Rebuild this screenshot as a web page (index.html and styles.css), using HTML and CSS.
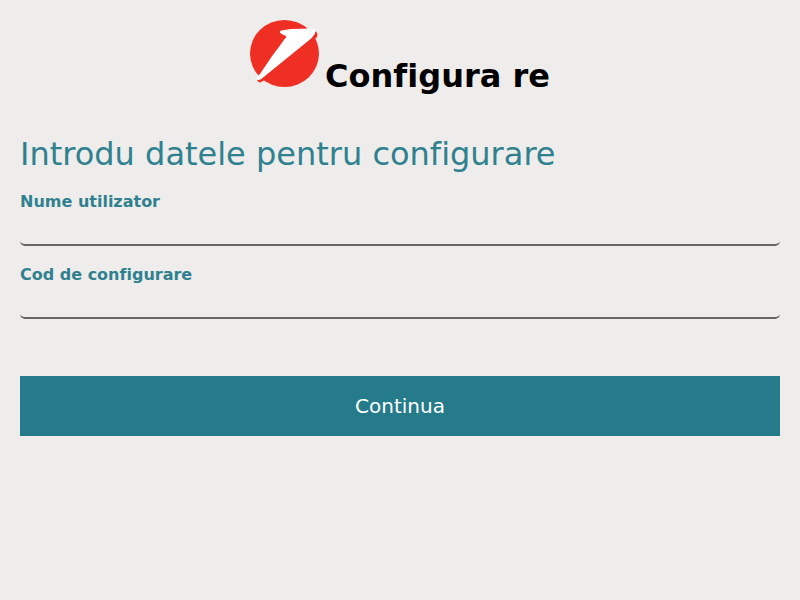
FILE: index.html
```html
<!DOCTYPE html>
<html lang="ro">
<head>
<meta charset="utf-8">
<meta name="viewport" content="width=device-width, initial-scale=1">
<title>Configurare</title>
<link rel="stylesheet" href="styles.css">
</head>
<body>
<header class="brand">
  <svg class="logo" viewBox="0 0 70 68" aria-hidden="true">
    <ellipse cx="34.5" cy="33.5" rx="34.5" ry="33.5" fill="#ef2e24"/>
    <path d="M63 10 Q69 12 67 17 L60 24Z M7 58 Q7 62 10 62.500 L13 61 L18 57Z" fill="#ef2e24"/>
    <path d="M31.500 12 L41 10.500 L62 10 Q65 10 63.500 13 L60.500 17 L10 58 L8 58.500 L11 55 L21.500 39.500 L38.500 16.500 Q37 14 33 13Z" fill="#fff" stroke="#fff" stroke-width="3" stroke-linejoin="round"/>
  </svg>
  <h1 class="brand-name">Configura re</h1>
</header>
<main>
  <form class="setup">
    <h2 class="heading">Introdu datele pentru configurare</h2>
    <div class="field">
      <label for="user">Nume utilizator</label>
      <input id="user" type="text">
    </div>
    <div class="field">
      <label for="code">Cod de configurare</label>
      <input id="code" type="text">
    </div>
    <button class="submit" type="submit">Continua</button>
  </form>
</main>
</body>
</html>
```
FILE: styles.css
```css
* {
  box-sizing: border-box;
}

body {
  margin: 0;
  padding: 20px;
  background: #eeedeb;
  font-family: "DejaVu Sans", sans-serif;
  font-variant-ligatures: none;
}

.brand {
  display: flex;
  justify-content: center;
  align-items: flex-start;
  gap: 5px;
}

.logo {
  width: 70px;
  height: 68px;
}

.brand-name {
  margin: 0;
  padding-top: 36px;
  font-size: 32px;
  line-height: 40px;
  color: #000;
}

.setup {
  display: flex;
  flex-direction: column;
}

.heading {
  margin: 38px 0 16px;
  font-size: 32px;
  font-weight: 400;
  line-height: 40px;
  color: #30818f;
}

.field {
  display: flex;
  flex-direction: column;
  margin-bottom: 17px;
}

.field label {
  font-size: 16px;
  font-weight: 700;
  line-height: 24px;
  color: #30818f;
}

.field input {
  width: 100%;
  height: 32px;
  padding: 0 4px;
  border: 0;
  border-bottom: 2px solid #666;
  border-radius: 5px;
  outline: 0;
  background: transparent;
  font: inherit;
}

.submit {
  height: 60px;
  margin-top: 40px;
  border: 0;
  background: #257b8a;
  color: #fff;
  font-family: inherit;
  font-size: 20px;
}
```
